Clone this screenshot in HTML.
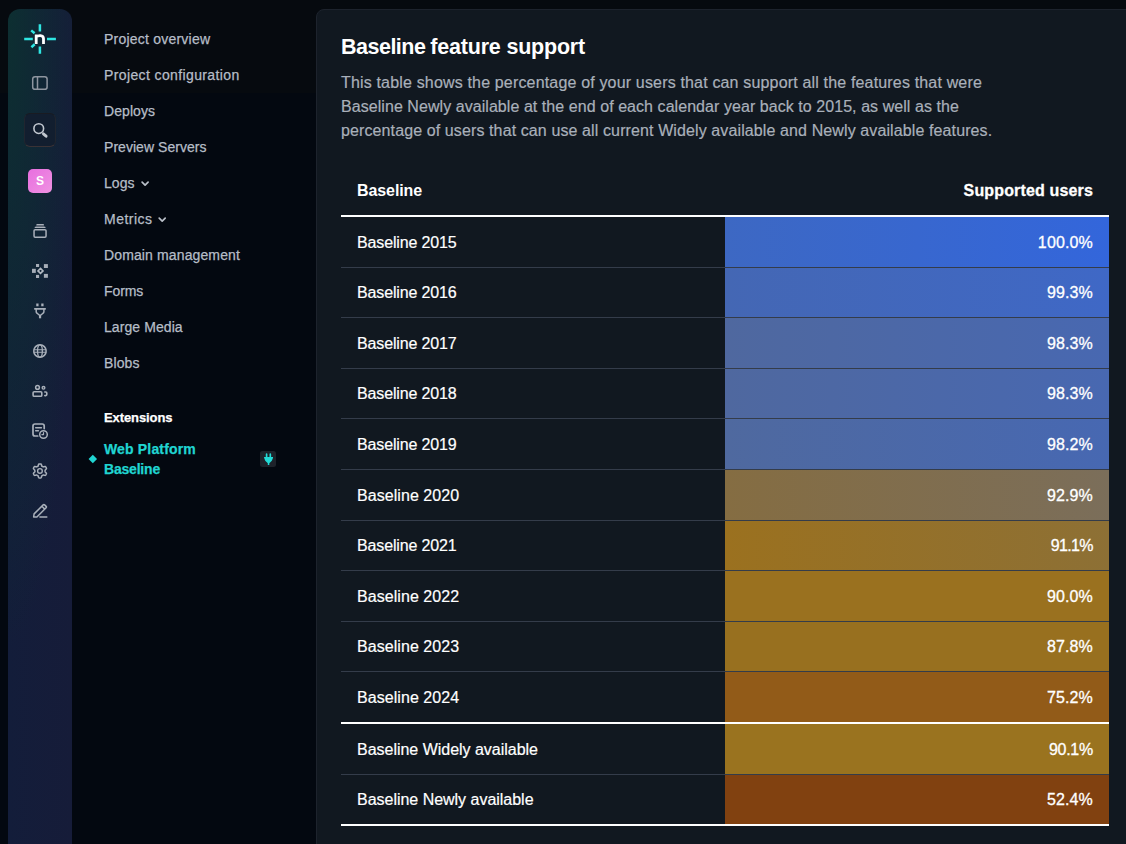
<!DOCTYPE html>
<html>
<head>
<meta charset="utf-8">
<title>Baseline feature support</title>
<style>
*{box-sizing:border-box;margin:0;padding:0}
html,body{width:1126px;height:844px;overflow:hidden;background:linear-gradient(#060a0f 0,#060a0f 93px,#030810 93px,#030810 100%);font-family:"Liberation Sans",sans-serif;}
body{position:relative;color:#fff}
.abs{position:absolute}
/* rail */
#rail{position:absolute;left:8px;top:9px;width:64px;height:850px;border-radius:12px 12px 0 0;background:radial-gradient(74px 640px at 0 0,#0d2f31 0%,rgba(13,47,49,0) 100%),linear-gradient(90deg,#131d3a,#161c39);}
/* nav */
.nav{-webkit-text-stroke:0.25px currentColor;position:absolute;left:104px;font-size:14px;line-height:20px;color:#b6bdc7;white-space:nowrap;letter-spacing:0.1px}
/* card */
#card{position:absolute;left:316px;top:9px;width:830px;height:860px;background:#111820;border:1px solid #1d232d;border-radius:8px}
h1{position:absolute;left:341px;top:34px;font-size:21.5px;line-height:26px;font-weight:700;color:#fff;white-space:nowrap}
.p{-webkit-text-stroke:0.2px currentColor;position:absolute;left:341px;font-size:16px;line-height:24px;color:#a9b0ba;white-space:nowrap}
/* table */
#tbl{position:absolute;left:341px;top:165.4px;width:768px}
.th{height:51.6px;border-bottom:2px solid #fff;position:relative;font-weight:700;font-size:16px}
.row{height:50.6px;border-bottom:1px solid #343c4a;position:relative;font-size:16px}
.row.w{border-bottom:2px solid #fff;height:51.6px}
.c1{position:absolute;left:16px;top:0;line-height:52.4px;white-space:nowrap}
.c2{position:absolute;left:384px;right:0;top:0;bottom:0;text-align:right;padding-right:16px;line-height:52.4px;white-space:nowrap}

.tl{color:#20d5d2}
#dia{position:absolute;left:90.2px;top:456px;width:5.6px;height:5.6px;background:#20d5d2;transform:rotate(45deg)}
#plug{position:absolute;left:260px;top:451px;width:16px;height:16px;border-radius:2.5px;background:#1d222a}
#plug svg{width:16px;height:16px;display:block}
h1{letter-spacing:-0.2px;transform:scaleY(1.055);transform-origin:0 20px}
.th .c1{letter-spacing:-0.09px}
.th .c2{letter-spacing:0.15px}
.row .c1{letter-spacing:-0.14px}
.r0{background:linear-gradient(90deg,#3d68c3,#3366db)}
.r1{background:linear-gradient(90deg,#4467b4,#3f68c6)}
.r2{background:linear-gradient(90deg,#4f689f,#4868b1)}
.r3{background:linear-gradient(90deg,#4f689f,#4868b1)}
.r4{background:linear-gradient(90deg,#4f699f,#4768b2)}
.r5{background:linear-gradient(90deg,#856d42,#7b6e5a)}
.r6{background:linear-gradient(90deg,#9b711f,#8d7035)}
.r7{background:linear-gradient(90deg,#9a711f,#9a711f)}
.r8{background:linear-gradient(90deg,#98701f,#98701f)}
.r9{background:linear-gradient(90deg,#925b18,#925b18)}
.r10{background:linear-gradient(90deg,#9a731f,#9a731f)}
.r11{background:linear-gradient(90deg,#814110,#814110)}

#sbox{position:absolute;left:24px;top:113px;width:32px;height:34px;border-radius:6px;background:#121e2f;border:1px solid #20252f;border-top-color:#191b22;border-bottom-color:#3a3235}
#ava{position:absolute;left:28px;top:169px;width:24px;height:24px;border-radius:5px;background:linear-gradient(135deg,#e86edf,#ef92e2);color:#fff;font-weight:700;font-size:12px;line-height:24px;text-align:center}
.row.u .c1,.row.u .c2{line-height:50.4px}
.c2{-webkit-text-stroke:0.3px #fff;letter-spacing:0.15px}
.row .c1{-webkit-text-stroke:0.2px #fff}
</style>
</head>
<body>
<div id="rail"></div>
<div id="sbox"></div>
<div id="ava">S</div>
<svg id="icons" width="80" height="560" viewBox="0 0 80 560" style="position:absolute;left:0;top:0" fill="none" stroke-linecap="round" stroke-linejoin="round">
<g stroke="#2fe6e2" stroke-width="2.5" stroke-linecap="butt">
<path d="M39.900 24.200V31.600M39.900 46.400V53.800M24.200 39H32.800M47 39H55.900M31.200 30.400L34.600 33.300M31.400 47.200L34.700 44.300"/>
</g>
<path d="M36.200 44V34.400M36.200 36.800C37.500 35.600 39 35.500 40.500 35.600C42.600 35.800 43.500 37 43.500 38.800V44" stroke="#fff" stroke-width="2.800" stroke-linecap="butt" stroke-linejoin="miter"/>
<g stroke="#8e959f" stroke-width="1.500">
<rect x="32.700" y="76.700" width="14.400" height="12.600" rx="2.400"/><path d="M37.500 76.700V89.300"/>
</g>
<g stroke="#c2c8d0" stroke-width="1.500">
<circle cx="38.750" cy="128.600" r="4.850" stroke-width="1.600"/><path d="M43.400 133.900L46.100 136.200" stroke-width="2.900"/>
</g>
<g stroke="#a9b0ba" stroke-width="1.500">
<rect x="34.050" y="229.650" width="12" height="7.500" rx="1.100"/><path d="M35.200 227.300H45M37 224.700H43.300" stroke-width="1.300"/><path d="M36.600 225.300H43.700L44.700 226.700H35.500Z" fill="#6b7380" stroke="none"/>
<path d="M37.400 303.500V306.200M42.400 303.500V306.200" stroke-width="2.300" stroke-linecap="butt"/>
<path d="M34.800 308.800H45.200" stroke-width="1.700"/>
<path d="M36.200 309.200V311.700C36.200 312.600 36.800 313 37.400 313.500L39.500 315.300H40.600L42.700 313.500C43.300 313 43.900 312.600 43.900 311.700V309.200"/>
<path d="M40.050 315.600V318.300" stroke-width="2.200" stroke-linecap="butt"/>
<circle cx="39.950" cy="351" r="6.200"/><ellipse cx="39.950" cy="351" rx="2.400" ry="6.200" stroke-width="1.300"/><path d="M34 349.800H46M34 352.200H46" stroke-width="1.100"/>
<circle cx="37.500" cy="387.400" r="1.850"/><rect x="33.100" y="391.750" width="8.700" height="4.500" rx="1.100" stroke-width="1.600"/>
<circle cx="43.500" cy="387.800" r="1.350" stroke-width="1.400"/><path d="M44.800 392H45.800a1 1 0 0 1 1 1V394.600a1 1 0 0 1-1 1H44.800" stroke-width="1.600"/>
<path d="M37.700 436H35a2 2 0 0 1-2-2V426a2 2 0 0 1 2-2H42.200a2 2 0 0 1 2 2V428.600" stroke-width="1.700"/>
<path d="M35.700 427.700H41.400M35.700 430.800H38.400"/>
<circle cx="43.500" cy="434.500" r="3.800"/><path d="M43.500 432.500V434.600H41.900" stroke-width="1.200"/>
<circle cx="39.950" cy="470.950" r="2.350" stroke-width="1.400"/>
<path d="M45.10 470.95L45.10 470.73L45.08 470.50L45.06 470.28L45.16 470.03L45.50 469.72L45.84 469.37L46.17 468.99L46.44 468.59L46.46 468.25L46.34 467.97L46.20 467.69L46.06 467.43L45.90 467.16L45.73 466.91L45.54 466.66L45.24 466.51L44.76 466.55L44.26 466.64L43.79 466.76L43.35 466.90L43.09 466.86L42.90 466.73L42.72 466.61L42.53 466.49L42.33 466.38L42.13 466.28L41.92 466.19L41.76 465.98L41.66 465.53L41.53 465.06L41.36 464.59L41.15 464.15L40.87 463.96L40.56 463.93L40.26 463.91L39.95 463.90L39.64 463.91L39.34 463.93L39.03 463.96L38.75 464.15L38.54 464.59L38.37 465.06L38.24 465.53L38.14 465.98L37.98 466.19L37.77 466.28L37.57 466.38L37.38 466.49L37.18 466.61L37.00 466.73L36.81 466.86L36.55 466.90L36.11 466.76L35.64 466.64L35.14 466.55L34.66 466.51L34.36 466.66L34.17 466.91L34.00 467.16L33.84 467.43L33.70 467.69L33.56 467.97L33.44 468.25L33.46 468.59L33.73 468.99L34.06 469.37L34.40 469.72L34.74 470.03L34.84 470.28L34.82 470.50L34.80 470.73L34.80 470.95L34.80 471.17L34.82 471.40L34.84 471.62L34.74 471.87L34.40 472.18L34.06 472.53L33.73 472.91L33.46 473.31L33.44 473.65L33.56 473.93L33.70 474.21L33.84 474.47L34.00 474.74L34.17 474.99L34.36 475.24L34.66 475.39L35.14 475.35L35.64 475.26L36.11 475.14L36.55 475.00L36.81 475.04L37.00 475.17L37.18 475.29L37.38 475.41L37.57 475.52L37.77 475.62L37.98 475.71L38.14 475.92L38.24 476.37L38.37 476.84L38.54 477.31L38.75 477.75L39.03 477.94L39.34 477.97L39.64 477.99L39.95 478.00L40.26 477.99L40.56 477.97L40.87 477.94L41.15 477.75L41.36 477.31L41.53 476.84L41.66 476.37L41.76 475.92L41.92 475.71L42.13 475.62L42.33 475.52L42.52 475.41L42.72 475.29L42.90 475.17L43.09 475.04L43.35 475.00L43.79 475.14L44.26 475.26L44.76 475.35L45.24 475.39L45.54 475.24L45.73 474.99L45.90 474.74L46.06 474.47L46.20 474.21L46.34 473.93L46.46 473.65L46.44 473.31L46.17 472.91L45.84 472.53L45.50 472.18L45.16 471.87L45.06 471.62L45.08 471.40L45.10 471.17Z"/>
<path d="M33.600 517L34.100 513.900L43.200 504.900a1 1 0 0 1 1.400 0L46.100 506.400a1 1 0 0 1 0 1.400L36.900 517ZM41.900 506.300L44.700 509.100M39.900 517.100H46.800"/>
</g>
<g fill="#a6adb7" stroke="none">
<rect x="36" y="264" width="3.100" height="3"/><rect x="43.900" y="264.100" width="4" height="3.900"/>
<rect x="32" y="268.800" width="3.800" height="4.100"/><rect x="36" y="274.900" width="3.100" height="3.100"/>
<rect x="43.900" y="273.900" width="4" height="3.900"/>
</g>
<path d="M40.500 268.400l2.500 2.500-2.500 2.500-2.500-2.500z" stroke="#b2b9c2" stroke-width="1.600" stroke-linejoin="miter"/>
</svg>
<div class="nav" style="top:29px;letter-spacing:0.22px">Project overview</div>
<div class="nav" style="top:65px;letter-spacing:0.38px">Project configuration</div>
<div class="nav" style="top:101px;letter-spacing:0.07px">Deploys</div>
<div class="nav" style="top:137px;letter-spacing:0.045px">Preview Servers</div>
<div class="nav" style="top:173px;letter-spacing:0.035px">Logs</div>
<div class="nav" style="top:209px;letter-spacing:0.5px">Metrics</div>
<div class="nav" style="top:245px;letter-spacing:0.126px">Domain management</div>
<div class="nav" style="top:281px;letter-spacing:-0.09px">Forms</div>
<div class="nav" style="top:317px;letter-spacing:0.08px">Large Media</div>
<div class="nav" style="top:353px;letter-spacing:0.09px">Blobs</div>
<div class="nav" style="top:408px;font-size:13px;font-weight:700;color:#fff;letter-spacing:-0.1px">Extensions</div>
<div class="nav tl" style="top:439px;font-weight:700;letter-spacing:0.16px">Web Platform</div>
<div class="nav tl" style="top:459px;font-weight:700;letter-spacing:-0.2px">Baseline</div>
<div id="dia"></div>
<div id="plug"><svg viewBox="0 0 16 16"><path d="M6.600 3.200V5.400M10.300 3.200V5.400" stroke="#22dad6" stroke-width="1.700" stroke-linecap="round" fill="none"/><path d="M4.100 6.100H13V7.400H12.500C12.500 9.200 11.400 10.300 10.300 11.200L9.300 12.300V14.100H7.800V12.300L6.800 11.200C5.700 10.300 4.600 9.200 4.600 7.400H4.100Z" fill="#22dad6"/></svg></div>
<svg class="abs" style="left:138px;top:176px" width="32" height="52" viewBox="138 176 32 52" fill="none" stroke="#b9bfc8" stroke-width="1.7" stroke-linecap="round" stroke-linejoin="round"><path d="M142.100 182.200L145.100 185.200L148.100 182.200M159.200 218.100L162.200 221.100L165.200 218.100"/></svg>
<div id="card"></div>
<h1><span style="letter-spacing:-0.5px;margin-right:-0.9px">Baseline</span> feature support</h1>
<div class="p" style="top:71px;letter-spacing:0.167px">This table shows the percentage of your users that can support all the features that were</div>
<div class="p" style="top:95px;letter-spacing:0.059px">Baseline Newly available at the end of each calendar year back to 2015, as well as the</div>
<div class="p" style="top:119px;letter-spacing:0.110px">percentage of users that can use all current Widely available and Newly available features.</div>
<div id="tbl">
<div class="th"><div class="c1">Baseline</div><div class="c2">Supported users</div></div>
<div class="row"><div class="c1">Baseline 2015</div><div class="c2 r0">100.0%</div></div>
<div class="row u"><div class="c1">Baseline 2016</div><div class="c2 r1">99.3%</div></div>
<div class="row"><div class="c1">Baseline 2017</div><div class="c2 r2">98.3%</div></div>
<div class="row u"><div class="c1">Baseline 2018</div><div class="c2 r3">98.3%</div></div>
<div class="row"><div class="c1">Baseline 2019</div><div class="c2 r4">98.2%</div></div>
<div class="row"><div class="c1" style="letter-spacing:0.06px">Baseline 2020</div><div class="c2 r5">92.9%</div></div>
<div class="row u"><div class="c1">Baseline 2021</div><div class="c2 r6" style="letter-spacing:-0.6px">91.1%</div></div>
<div class="row"><div class="c1" style="letter-spacing:0.06px">Baseline 2022</div><div class="c2 r7">90.0%</div></div>
<div class="row u"><div class="c1" style="letter-spacing:0.06px">Baseline 2023</div><div class="c2 r8">87.8%</div></div>
<div class="row w"><div class="c1" style="letter-spacing:0.06px">Baseline 2024</div><div class="c2 r9">75.2%</div></div>
<div class="row"><div class="c1" style="letter-spacing:-0.02px">Baseline Widely available</div><div class="c2 r10" style="letter-spacing:-0.25px">90.1%</div></div>
<div class="row w u"><div class="c1" style="letter-spacing:-0.02px">Baseline Newly available</div><div class="c2 r11">52.4%</div></div>
</div>
</body>
</html>
